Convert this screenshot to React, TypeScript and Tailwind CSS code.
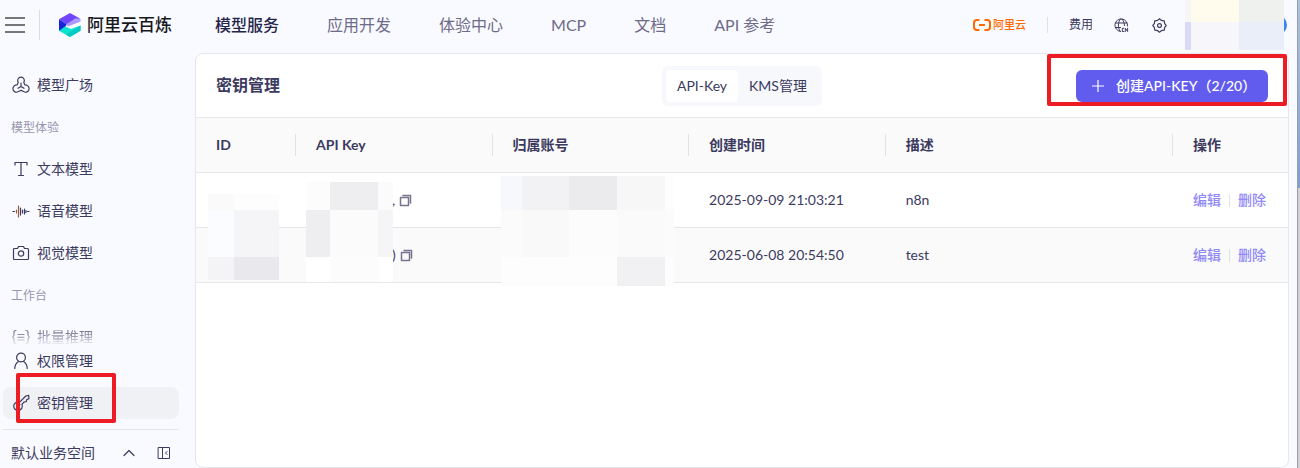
import React from "react";

const ink = "text-[#3c3a5e]";

type P = { children: React.ReactNode; className?: string; box?: string };
function Icon({ children, className = "size-4", box = "0 0 16 16" }: P) {
  return (
    <svg viewBox={box} className={`shrink-0 ${className}`} fill="none" stroke="currentColor" strokeWidth="1.2" strokeLinecap="round" strokeLinejoin="round" aria-hidden="true">
      {children}
    </svg>
  );
}

const PlazaIcon = () => (
  <Icon className="size-[18px]" box="0 0 18 18">
    <path d="M9 1.200a3.300 3.300 0 0 1 3.300 3.300c0 .8-.2 1.400-.5 2l1 2.300a4 4 0 0 1 4.300 4 3.400 3.400 0 0 1-5.600 2.600 3.600 3.600 0 0 1-2.500-1.300 3.600 3.600 0 0 1-2.500 1.300A3.400 3.400 0 0 1 .9 12.800a4 4 0 0 1 4.300-4l1-2.300c-.3-.6-.5-1.200-.5-2A3.300 3.300 0 0 1 9 1.200z" />
    <path d="M9 7v3.500M9 10.500l-3 1.800M9 10.500l3 1.800" />
  </Icon>
);
const TextIcon = () => (
  <Icon className="size-[18px]" box="0 0 18 18">
    <path d="M3 5V2.500h12V5M9 2.500v13M6.500 15.500h5" />
  </Icon>
);
const VoiceIcon = () => (
  <Icon className="size-[18px]" box="0 0 18 18">
    <path d="M1 9.500h1.500M15.500 9.500H17" />
    <path d="M4.500 8v3M6.500 4v11" stroke="#9a5b3c" />
    <path d="M8.500 6v7M10.500 8v3M12.500 7v5M14 8.500v2" />
  </Icon>
);
const CameraIcon = () => (
  <Icon className="size-[18px]" box="0 0 18 18">
    <path d="M2.500 4.500h3l1-2h5l1 2h3a1 1 0 0 1 1 1v9a1 1 0 0 1-1 1h-13a1 1 0 0 1-1-1v-9a1 1 0 0 1 1-1z" />
    <circle cx="9" cy="9.500" r="2.700" />
  </Icon>
);
const BatchIcon = () => (
  <Icon className="size-[18px]" box="0 0 18 18">
    <path d="M4 2.500c-1.500 0-2 .7-2 2v2.500L.8 9 2 11v2.500c0 1.300.5 2 2 2M14 2.500c1.500 0 2 .7 2 2v2.500L17.200 9 16 11v2.500c0 1.300-.5 2-2 2M6 6.500h6M6 9.300h6M6 12h6" />
  </Icon>
);
const UserIcon = () => (
  <Icon className="size-[18px]" box="0 0 18 18">
    <circle cx="9" cy="5.500" r="4.400" />
    <path d="M2.800 16.500c0-3 1.400-5.400 3.600-7M15.200 16.500c0-3-1.400-5.400-3.600-7" />
  </Icon>
);
const KeyIcon = () => (
  <Icon className="size-[18px]" box="0 0 18 18">
    <path d="M7.700 8.200 13.800 2l2.900-.6.200 3.400-2.200.8-.4 2-2.200.4-2.200 2.300a4.300 4.300 0 1 1-2.200-2.100z" />
    <path d="M5 13.300l3-3" />
  </Icon>
);

function NavItem({ icon, label, active, faded }: { icon: React.ReactNode; label: string; active?: boolean; faded?: boolean }) {
  return (
    <a
      href="#"
      aria-current={active ? "page" : undefined}
      className={`flex h-8 items-center gap-[7px] rounded-lg pl-[9px] text-sm ${active ? "bg-[#f0f1f5]" : ""} ${faded ? "[mask-image:linear-gradient(to_bottom,#000a_35%,transparent_78%)]" : ""}`}
    >
      {icon}
      <span>{label}</span>
    </a>
  );
}

function Mosaic({ className, cells }: { className: string; cells: string[] }) {
  return (
    <div className={`absolute grid ${className}`} aria-hidden="true">
      {cells.map((c, i) => (
        <span key={i} className={c} />
      ))}
    </div>
  );
}

const CopyButton = () => (
  <button type="button" aria-label="复制" className="block text-[#77748f]">
    <Icon className="size-[13px]" box="0 0 13 13">
      <path d="M1.500 3.500h8v8h-8zM4 1.500h7.500V9" strokeWidth="1.500" />
    </Icon>
  </button>
);

const rows = [
  { tail: ",", time: "2025-09-09 21:03:21", desc: "n8n", shade: "bg-white", pad: "pl-[77px]" },
  { tail: ")", time: "2025-06-08 20:54:50", desc: "test", shade: "bg-[#fafafb]", pad: "pl-[77px]" },
];
const heads = ["ID", "API Key", "归属账号", "创建时间", "描述", "操作"];

export default function App() {
  return (
    <div className={`relative flex min-h-screen overflow-hidden bg-[#f9faff] font-['Lato','Noto_Sans_CJK_SC',sans-serif] ${ink}`}>
      <div className="flex min-w-0 flex-1 flex-col">
        <header className="flex h-[53px] shrink-0 items-center pb-[3px] pl-[5px]">
          <button type="button" aria-label="菜单" className="text-[#777]">
            <svg viewBox="0 0 20 18" className="h-[18px] w-5" fill="currentColor"><path d="M0 1h20v2H0zM0 8h20v2H0zM0 15h20v2H0z" /></svg>
          </button>
          <span className="ml-3.5 h-[30px] w-px bg-[#dcdde3]" />
          <a href="#" className="ml-[19px] flex items-center gap-[6px] text-[17px] font-medium text-[#17181c]">
            <svg viewBox="0 0 22 24" className="h-6 w-[22px]" aria-hidden="true">
              <path d="M0 6.200 11 0l10 5.600L7 11.500z" fill="#7046fb" />
              <path d="M7 11.500 16.500 5.200 21.500 6v2.500L9 13.500z" fill="#ab9aff" />
              <path d="M0 6.200l7.500 5.300L5 16l-5 2z" fill="#1723d8" />
              <path d="M0 17.800l6-4.300 6 2.500 9.500-3.500v5.300L11 24z" fill="#05e5cf" />
              <path d="M7 21.700l14.500-9.200v5.300L11 24z" fill="#08c9c4" />
            </svg>
            阿里云百炼
          </a>
          <nav className="ml-[43px] flex items-center gap-12 whitespace-nowrap text-base text-[#6e6b88]">
            <a href="#" className="font-medium text-[#26244c]">模型服务</a>
            <a href="#">应用开发</a>
            <a href="#">体验中心</a>
            <a href="#">MCP</a>
            <a href="#">文档</a>
            <a href="#">API 参考</a>
          </nav>
          <div className="ml-auto flex h-full items-center pr-[10px] text-xs">
            <a href="#" className="flex items-center gap-[2px] whitespace-nowrap text-[11px] font-medium text-[#ff6a00]">
              <svg viewBox="0 0 18 12" className="h-3 w-[18px]" fill="none" stroke="currentColor" strokeWidth="2" aria-hidden="true">
                <path d="M6.500 1H4Q1 1 1 4v4q0 3 3 3h2.500M11.500 1H14q3 0 3 3v4q0 3-3 3h-2.500M6 6h6" />
              </svg>
              阿里云
            </a>
            <span className="mx-[21px] h-4 w-px bg-[#e1e2e8]" />
            <a href="#" className="whitespace-nowrap">费用</a>
            <button type="button" aria-label="语言" className="ml-[21px]">
              <Icon className="size-[15px]" box="0 0 15 15">
                <path d="M6.500 13.500A6.300 6.300 0 1 1 13.500 8M1.300 5h11.600M1.300 9.500h5.200M6.500 1C3.700 4 3.700 10 6.200 13.500M7.800 1c1.700 1.700 2.700 4 2.700 6.500" strokeWidth="1" />
                <path d="M9.800 10.300H8.300v3.200h1.500M11.300 13.500v-3.200l2.300 3.200v-3.200" strokeWidth="1" />
              </Icon>
            </button>
            <button type="button" aria-label="设置" className="ml-[23px]">
              <Icon className="size-[15px]" box="0 0 15 15">
                <path d="M7.500.8 9.300 2.300l2.900.5.500 2.900 1.500 1.800-1.500 1.800-.5 2.900-2.900.5-1.800 1.500-1.800-1.500-2.900-.5-.5-2.900L.8 7.500l1.500-1.800.5-2.900 2.900-.5z" />
                <circle cx="7.500" cy="7.500" r="1.900" />
              </Icon>
            </button>
            <div className="relative ml-[18px] h-[50px] w-[102px] overflow-hidden">
              <span className="absolute top-[15px] right-0 size-5 rounded-full bg-[#3d82f2]" />
              <Mosaic
                className="top-0 left-0 h-full w-[99px] grid-cols-[6px_48px_45px] grid-rows-[22px_1fr]"
                cells={["bg-[#f6f6f7]", "bg-[#fffbed]", "bg-[#eff1ef]", "bg-[#dbd9fa]", "bg-[#f7f7fb]", "bg-[#e9eef8]"]}
              />
            </div>
          </div>
        </header>

        <div className="flex flex-1">
          <aside className="flex w-[195px] shrink-0 flex-col pr-4 pl-[3px]">
            <nav className="flex flex-col">
              <div className="pt-4"><NavItem icon={<PlazaIcon />} label="模型广场" /></div>
              <h2 className="mt-[17px] pl-2 text-xs leading-5 text-[#9896ae]">模型体验</h2>
              <div className="mt-[15px] flex flex-col gap-[10px]">
                <NavItem icon={<TextIcon />} label="文本模型" />
                <NavItem icon={<VoiceIcon />} label="语音模型" />
                <NavItem icon={<CameraIcon />} label="视觉模型" />
              </div>
              <h2 className="mt-[17px] pl-2 text-xs leading-5 text-[#9896ae]">工作台</h2>
              <div className="mt-[15px] -mb-2"><NavItem icon={<BatchIcon />} label="批量推理" faded /></div>
              <div className="flex flex-col gap-[10px]">
                <NavItem icon={<UserIcon />} label="权限管理" />
                <NavItem icon={<KeyIcon />} label="密钥管理" active />
              </div>
            </nav>
            <div className="mt-[10px] flex h-[39px] items-center border-t border-[#e4e5eb] pt-2 pr-2 pl-2 text-sm">
              <span>默认业务空间</span>
              <button type="button" aria-label="展开" className="ml-auto"><Icon className="h-3 w-3" box="0 0 12 12"><path d="M1 8.500 6 3.500l5 5" /></Icon></button>
              <button type="button" aria-label="收起侧栏" className="ml-[22px]">
                <Icon className="size-[14px]" box="0 0 14 14"><path d="M1.500 1.500h11v11h-11zM5.500 1.500v11M10 5.500 8.500 7 10 8.500" strokeWidth="1" /></Icon>
              </button>
            </div>
          </aside>

          <main className="mr-2 min-w-0 flex-1 overflow-hidden rounded-lg border border-[#e6e7ed] bg-white">
            <div className="grid h-[63px] grid-cols-[1fr_auto_1fr] items-center px-5">
              <h1 className="pb-0.5 text-base font-bold">密钥管理</h1>
              <div role="tablist" className="flex rounded-md bg-[#f7f8fb] p-1 text-sm">
                <button type="button" role="tab" aria-selected="true" className="h-8 w-[72px] rounded bg-white">API-Key</button>
                <button type="button" role="tab" aria-selected="false" className="h-8 w-20">KMS管理</button>
              </div>
              <button type="button" className="flex h-8 w-48 items-center gap-3 justify-self-end rounded-md bg-[#615ced] pl-4 text-sm font-medium whitespace-nowrap text-white">
                <Icon className="size-3" box="0 0 12 12"><path d="M0 6h12M6 0v12" /></Icon>
                创建API-KEY（2/20）
              </button>
            </div>
            <div className="relative">
              <table className="w-full table-fixed border-collapse text-left text-sm">
                <colgroup>
                  <col className="w-[99px]" />
                  <col className="w-[18%]" />
                  <col className="w-[18%]" />
                  <col className="w-[18%]" />
                  <col />
                  <col className="w-[116px]" />
                </colgroup>
                <thead>
                  <tr className="h-[55px] border-y border-[#e6e7ed] bg-[#fafafb]">
                    {heads.map((h, i) => (
                      <th key={h} scope="col" className="p-0 font-bold">
                        <span className={`flex h-[22px] items-center pl-5 ${i ? "border-l border-[#e1e2e8]" : ""}`}>{h}</span>
                      </th>
                    ))}
                  </tr>
                </thead>
                <tbody>
                  {rows.map((r) => (
                    <tr key={r.time} className={`h-[55px] border-b border-[#e6e7ed] ${r.shade}`}>
                      <td />
                      <td className="p-0 pl-5">
                        <span className={`flex items-center gap-1 ${r.pad}`}>{r.tail}<CopyButton /></span>
                      </td>
                      <td />
                      <td className="p-0 pl-[21px] whitespace-nowrap">{r.time}</td>
                      <td className="p-0 pl-[21px]">{r.desc}</td>
                      <td className="p-0 pl-[21px]">
                        <span className="flex items-center font-medium whitespace-nowrap text-[#9089f7]">
                          <button type="button">编辑</button>
                          <span className="mx-2 h-[13px] w-px bg-[#e1e2e8]" />
                          <button type="button">删除</button>
                        </span>
                      </td>
                    </tr>
                  ))}
                </tbody>
              </table>
              <Mosaic
                className="top-[77px] left-3 grid-cols-[26px_45px] grid-rows-[16px_47px_23px]"
                cells={["bg-[#fafafa]", "bg-[#fdfdfd]", "bg-[#fafcff]", "bg-[#f5f5f7]", "bg-[#f4f4f6]", "bg-[#e9e8ed]"]}
              />
              <Mosaic
                className="top-[65px] left-[110px] grid-cols-[24px_48px_15px] grid-rows-[28px_47px_25px]"
                cells={["bg-[#fcfcfc]", "bg-[#eeeef0]", "bg-[#fbfbfb]", "bg-[#eeeef0]", "bg-[#fbfbfb]", "bg-[#f5f5f7]", "bg-white", "bg-[#fcfcfc]", "bg-white"]}
              />
              <Mosaic
                className="top-[59px] left-[305px] grid-cols-[21px_47px_48px_48px_9px] grid-rows-[34px_47px_29px]"
                cells={[
                  "bg-[#f7f8fb]", "bg-[#f2f2f4]", "bg-[#ebebed]", "bg-[#f7f7f8]", "bg-[#fdfdfd]",
                  "bg-[#fbfbfb]", "bg-[#f9f9f9]", "bg-[#fcfcfc]", "bg-[#fafafb]", "bg-[#fbfbfb]",
                  "bg-[#fdfdfd]", "bg-[#fdfdfd]", "bg-[#fdfdfd]", "bg-[#f1f1f4]", "bg-[#fdfdfd]",
                ]}
              />
            </div>
          </main>
        </div>
      </div>

      <div className="flex w-[3px] shrink-0 flex-col border-l border-[#9a9da5]" aria-hidden="true">
        <div className="h-[188px] bg-linear-to-b from-[#a9c4dc] to-[#7d9fd4]" />
        <div className="flex-1 bg-[#d2d2d2]" />
      </div>

      <div className="pointer-events-none absolute top-[54px] right-[13px] h-[52px] w-[240px] rounded-xs border-4 border-[#ed1c24]" />
      <div className="pointer-events-none absolute top-[373px] left-4 h-[50px] w-[100px] rounded-xs border-4 border-[#ed1c24]" />
    </div>
  );
}
